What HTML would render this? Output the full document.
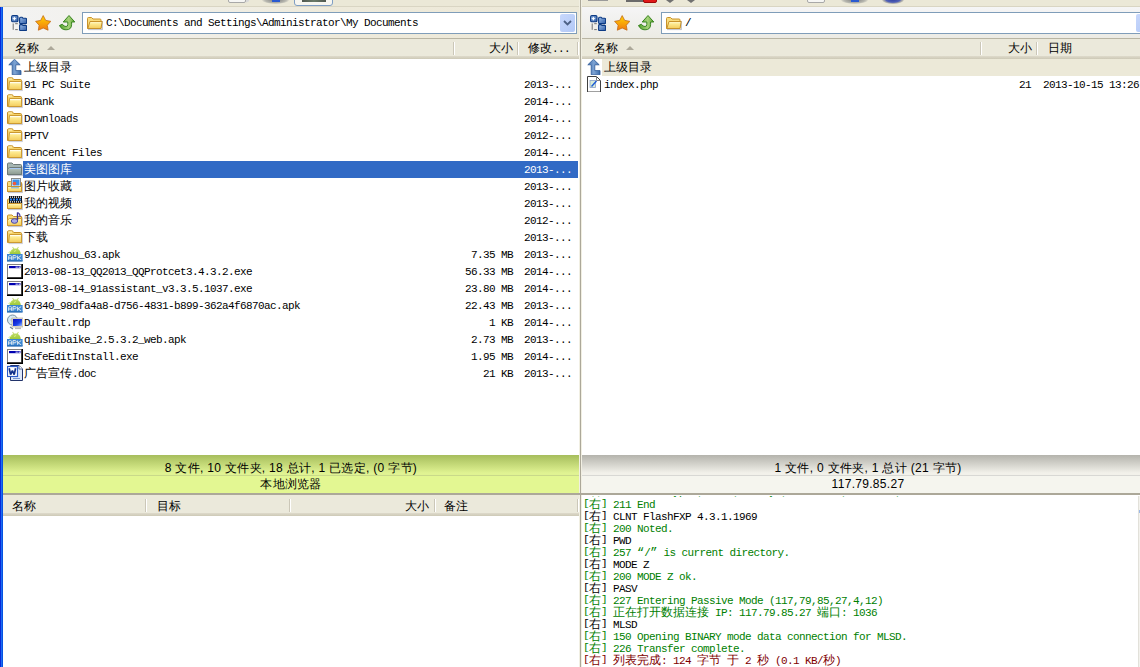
<!DOCTYPE html>
<html><head><meta charset="utf-8">
<style>
*{box-sizing:border-box;margin:0;padding:0}
html,body{width:1140px;height:667px;overflow:hidden;background:#ece9d8;font-family:"Liberation Sans",sans-serif;font-size:12px;color:#000}
.a{position:absolute}
.m{position:absolute;font-family:"Liberation Mono",monospace;font-size:11px;letter-spacing:-0.6px;white-space:pre;line-height:17px;height:17px}
.c{letter-spacing:0;font-size:12px}
.s{position:absolute;font-family:"Liberation Sans",sans-serif;font-size:12px;white-space:pre;line-height:17px}
.tb{position:absolute;top:7px;height:31px}
.combo{position:absolute;top:12px;height:22px;border:1px solid #7f9db9;background:#fff}
.hdr{position:absolute;height:21px;background:linear-gradient(#b9b5a3 0,#b9b5a3 1px,#ebe9db 1px,#ebe9db 18px,#dedacb 18px,#cdc9b6 21px)}
.sep{position:absolute;width:2px;height:13px;border-left:1px solid #cbc7b8;border-right:1px solid #fff}
.list{position:absolute;background:#fff}
.r{text-align:right}
.b{display:inline-block;transform:translateY(-1.5px) scaleY(.75)}
</style></head><body>


<svg width="0" height="0" style="position:absolute">
<defs>
<linearGradient id="gfold" x1="0" y1="0" x2="0" y2="1"><stop offset="0" stop-color="#fffbd8"/><stop offset="0.35" stop-color="#fde98e"/><stop offset="1" stop-color="#f3cc5c"/></linearGradient>
<linearGradient id="gfoldb" x1="0" y1="0" x2="0" y2="1"><stop offset="0" stop-color="#fff4c0"/><stop offset="1" stop-color="#f0c860"/></linearGradient>
<linearGradient id="ggray" x1="0" y1="0" x2="0" y2="1"><stop offset="0" stop-color="#b8c8c0"/><stop offset="1" stop-color="#8a9890"/></linearGradient>
<linearGradient id="gapk" x1="0" y1="0" x2="0" y2="1"><stop offset="0" stop-color="#c8e070"/><stop offset="1" stop-color="#9cc83a"/></linearGradient>
<linearGradient id="gstar" x1="0" y1="0" x2="0" y2="1"><stop offset="0" stop-color="#ffd400"/><stop offset="1" stop-color="#f27a12"/></linearGradient>
<linearGradient id="garrow" x1="0" y1="0" x2="1" y2="0"><stop offset="0" stop-color="#4ea02a"/><stop offset="0.6" stop-color="#a6d27a"/><stop offset="1" stop-color="#5aa832"/></linearGradient>
<linearGradient id="gblue" x1="0" y1="0" x2="1" y2="0"><stop offset="0" stop-color="#3c6aa8"/><stop offset="0.5" stop-color="#7ea4d4"/><stop offset="1" stop-color="#3c6aa8"/></linearGradient>
<linearGradient id="gtree" x1="0" y1="0" x2="1" y2="1"><stop offset="0" stop-color="#9ec0ec"/><stop offset="1" stop-color="#2c5aa4"/></linearGradient>
<linearGradient id="gscreen" x1="0" y1="0" x2="1" y2="1"><stop offset="0" stop-color="#0a10c0"/><stop offset="0.6" stop-color="#1a40e8"/><stop offset="1" stop-color="#a0c0ff"/></linearGradient>
<symbol id="folder" viewBox="0 0 16 16">
 <path d="M1.5 14.6 H15.4 V5" fill="none" stroke="#5a5a70" stroke-width="1" opacity=".3"/>
 <path d="M0.5 3 Q0.5 1.8 1.7 1.8 H4.8 Q5.6 1.8 6.2 2.6 L6.8 3.5 H13.4 Q14.5 3.5 14.5 4.6 V13.5 H0.5 Z" fill="#f6d46a" stroke="#c48e26"/>
 <path d="M1.3 3 H5" stroke="#fff6c8" stroke-width="1"/>
 <path d="M2.5 5.5 H14.5 V13.5 H1.5 Z" fill="url(#gfold)" stroke="#cc9a32"/>
 <path d="M3 6.6 H13.6" stroke="#fffef0" stroke-width="1"/>
</symbol>
<symbol id="gfolder" viewBox="0 0 16 16">
 <path d="M1 14.6 H15.4 V5.5" fill="none" stroke="#4a5070" stroke-width="1" opacity=".35"/>
 <path d="M0.5 3 Q0.5 2 1.5 2 H5 L6.5 3.5 H13.5 Q14.5 3.5 14.5 4.5 V13.5 H0.5 Z" fill="#a6b6b2" stroke="#6e7a78"/>
 <path d="M2.5 6.5 H14.5 V13.5 H0.5 V8 Z" fill="url(#ggray)" stroke="#6e7a78"/>
 <path d="M3 7.5 H13.5" stroke="#a8c8f0" stroke-width="1"/>
</symbol>
<symbol id="picfolder" viewBox="0 0 16 16">
 <path d="M1 14.6 H15.4 V5.5" fill="none" stroke="#4a5070" stroke-width="1" opacity=".35"/>
 <path d="M0.5 4.5 Q0.5 3.5 1.5 3.5 H3.5 L4.5 4.5 H14.5 V13.5 H0.5 Z" fill="#f8dc7c" stroke="#c8922a"/>
 <rect x="4.5" y="0.5" width="9" height="9" fill="#fff" stroke="#8a8a8a"/>
 <rect x="5.5" y="1.5" width="7" height="6" fill="#3a90e8"/>
 <circle cx="7.5" cy="5.5" r="1.8" fill="#f25a38"/>
 <path d="M0.5 8.5 H14.5 V13.5 H0.5 Z" fill="url(#gfold)" stroke="#c8922a"/>
 <path d="M4 9.8 H12" stroke="#6aaae8" stroke-width="1"/>
</symbol>
<symbol id="vidfolder" viewBox="0 0 16 16">
 <path d="M1 14.6 H15.4 V5.5" fill="none" stroke="#4a5070" stroke-width="1" opacity=".35"/>
 <path d="M0.5 5 Q0.5 4 1.5 4 H14.5 V13.5 H0.5 Z" fill="#f8dc7c" stroke="#c8922a"/>
 <rect x="2" y="1" width="13" height="7" fill="#101418"/>
 <path d="M3 2.2h1M5 2.2h1M7 2.2h1M9 2.2h1M11 2.2h1M13 2.2h1M3 6.8h1M5 6.8h1M7 6.8h1M9 6.8h1M11 6.8h1M13 6.8h1" stroke="#fff" stroke-width="1.2"/>
 <path d="M3 4.5h2M6 4.5h2M9 4.5h2M12 4.5h2" stroke="#2a80f0" stroke-width="2"/>
 <path d="M0.5 8.5 H14.5 V13.5 H0.5 Z" fill="url(#gfold)" stroke="#c8922a"/>
</symbol>
<symbol id="musfolder" viewBox="0 0 16 16">
 <path d="M1 14.6 H15.4 V5.5" fill="none" stroke="#4a5070" stroke-width="1" opacity=".35"/>
 <path d="M0.5 4 Q0.5 3 1.5 3 H5 L6.5 4.5 H14.5 V13.5 H0.5 Z" fill="#f8dc7c" stroke="#c8922a"/>
 <path d="M2.5 6.5 H14.5 V13.5 H0.5 V8 Z" fill="url(#gfold)" stroke="#d09a30"/>
 <path d="M10.5 0.5 V8" stroke="#38308a" stroke-width="1.4"/>
 <path d="M10.5 0.5 Q13.5 2 13 5" stroke="#5048a8" stroke-width="1.3" fill="none"/>
 <ellipse cx="7.5" cy="9" rx="3.2" ry="2.3" fill="#a8a8e8" stroke="#4a48a0"/>
</symbol>
<symbol id="apk" viewBox="0 0 16 16">
 <path d="M2.5 8.2 Q2.8 4.2 6.2 3 L5.2 1.2 L6 0.8 L7 2.6 Q8.5 2.2 10 2.6 L11 0.8 L11.8 1.2 L10.8 3 Q13.6 4.4 13.8 8.2 Z" fill="url(#gapk)"/>
 <path d="M1.5 6.5 L4.5 5 M7 5.5 L9 4.5" stroke="#d8f088" stroke-width="1"/>
 <rect x="0" y="8" width="15.6" height="7" fill="#3a86d2"/>
 <rect x="0" y="14.4" width="15.6" height="1.2" fill="#2066b0"/>
 <path d="M1.6 13.8V10.6Q1.6 9.6 2.6 9.6H3.6Q4.6 9.6 4.6 10.6V13.8M1.6 12H4.6M6 13.8V9.6H8.2Q9.2 9.6 9.2 10.7Q9.2 11.8 8.2 11.8H6M10.6 9.6V13.8M14.2 9.6L11 11.8L14.2 13.8" fill="none" stroke="#dce6ee" stroke-width="1"/>
</symbol>
<symbol id="exe" viewBox="0 0 16 16">
 <rect x="0" y="1" width="16" height="15" fill="#000"/>
 <rect x="0" y="1" width="14.5" height="13.5" fill="#808080"/>
 <rect x="1" y="2" width="13" height="12" fill="#fff"/>
 <rect x="2" y="3" width="11.5" height="2.2" fill="#0000b0"/>
 <rect x="8.6" y="3.6" width="1.2" height="1.1" fill="#fff"/><rect x="10.3" y="3.6" width="1.2" height="1.1" fill="#fff"/><rect x="12" y="3.6" width="1.2" height="1.1" fill="#fff"/>
</symbol>
<symbol id="rdp" viewBox="0 0 16 16">
 <circle cx="5.5" cy="6" r="5" fill="#d8eaf4" stroke="#7a90a0"/>
 <circle cx="5.5" cy="6" r="1.5" fill="#fff" stroke="#90a0b0" stroke-width=".6"/>
 <path d="M3 13 L6 15" stroke="#6a8090" stroke-width="1.2"/>
 <rect x="5" y="4" width="11" height="9" fill="#e8e4d8" stroke="#b0a890" stroke-width=".6"/>
 <rect x="6" y="5" width="9" height="7" fill="url(#gscreen)"/>
 <rect x="8" y="13.5" width="6" height="1.6" fill="#b8b8b8"/>
</symbol>
<symbol id="doc" viewBox="0 0 16 16">
 <path d="M3.5 0.5 H12 L15.5 4 V15.5 H3.5 Z" fill="#dde8fa" stroke="#22336a"/>
 <path d="M12 0.5 V4 H15.5" fill="#fff" stroke="#5a6c98"/>
 <path d="M6 13.5 H13" stroke="#7a98d0"/>
 <rect x="0.5" y="1.5" width="10" height="10" fill="#fff" stroke="#2a5ac8" stroke-width="1.2"/>
 <path d="M2.2 3.2 L3.6 9.6 L5.4 5.6 L7.2 9.6 L8.6 3.2" fill="none" stroke="#10308a" stroke-width="1.7" stroke-linejoin="bevel"/>
</symbol>
<symbol id="php" viewBox="0 0 16 16">
 <path d="M1.5 0.5 H10.5 L14.5 4.5 V16 H1.5 Z" fill="#fff" stroke="#404040"/>
 <path d="M10.5 0.5 V4.5 H14.5" fill="none" stroke="#808080"/>
 <rect x="4" y="4.5" width="5.5" height="7" fill="#d8ecd8" stroke="#8aa0c8" stroke-width=".8"/>
 <path d="M5.5 10.5 L10.5 5" stroke="#1a5ad8" stroke-width="1.4"/>
</symbol>
<symbol id="up" viewBox="0 0 16 16">
 <path d="M7.5 0.3 L13.2 5.8 H8.8 V11.6 H14 V15.8 H5.2 V5.8 H1.8 Z" fill="url(#gblue)" stroke="#2f5a98" stroke-width=".8"/>
</symbol>
<symbol id="tree" viewBox="0 0 16 16">
 <rect x="0.6" y="0.6" width="6.4" height="6.2" rx="1.3" fill="url(#gtree)" stroke="#0c3a84" stroke-width="1.1"/>
 <path d="M3.4 1.6 L4.1 3.1 L5.6 3.7 L4.1 4.3 L3.4 5.8 L2.7 4.3 L1.2 3.7 L2.7 3.1 Z" fill="#fff"/>
 <path d="M2.2 8.5 V14.8" stroke="#707070" stroke-width="1"/>
 <path d="M4.2 8.7 H6.8 M4.2 14.6 H6.8" stroke="#707070" stroke-width="1"/>
 <path d="M8.6 3.2 Q8.6 2.2 9.6 2.2 H11 L12 3.2 H14.6 Q15.6 3.2 15.6 4.2 V7.8 Q15.6 8.6 14.6 8.6 H9.6 Q8.6 8.6 8.6 7.8 Z" fill="url(#gtree)" stroke="#0c3a84" stroke-width="1.1"/>
 <path d="M8.6 10.4 Q8.6 9.6 9.6 9.6 H11 L12 10.4 H14.6 Q15.6 10.4 15.6 11.4 V14.8 Q15.6 15.6 14.6 15.6 H9.6 Q8.6 15.6 8.6 14.8 Z" fill="url(#gtree)" stroke="#0c3a84" stroke-width="1.1"/>
</symbol>
<symbol id="star" viewBox="0 0 16 16">
 <path d="M8.20 0.60 L10.73 5.42 L15.8 6.34 L12.29 10.23 L13.08 15.2 L8.20 13.0 L3.32 15.2 L4.11 10.23 L0.6 6.34 L5.67 5.42 Z" fill="url(#gstar)" stroke="#c46a18" stroke-width=".8" stroke-linejoin="round"/>
</symbol>
<symbol id="refresh" viewBox="0 0 16 16">
 <path d="M10 0.5 L15.8 7 H12.6 V9.5 Q12.6 14.8 7 14.8 Q2.5 14.8 0.5 10.5 L3.4 9.2 Q4.6 11.5 7 11.5 Q8.8 11.5 8.8 9.5 V7 H4.2 Z" fill="url(#garrow)" stroke="#2c7c14" stroke-width=".9" stroke-linejoin="round"/>
</symbol>
<symbol id="ofolder" viewBox="0 0 16 16">
 <path d="M1 14.6 H15.4 V6" fill="none" stroke="#4a5070" stroke-width="1" opacity=".35"/>
 <path d="M0.5 3.5 Q0.5 2.5 1.5 2.5 H4.5 L6 4 H13 Q14 4 14 5 V13.5 H0.5 Z" fill="#f8dc7c" stroke="#c8922a"/>
 <path d="M3 6.5 H15.2 L14 13.5 H0.8 Z" fill="url(#gfold)" stroke="#c8922a"/>
</symbol>
</defs></svg>

<div class="a" style="left:0;top:0;width:3px;height:667px;background:linear-gradient(to right,#0828d8 0,#0828d8 1px,#1c6cf2 1px,#1c6cf2 2px,#0452e2 2px)"></div>
<div class="a" style="left:0;top:0;width:1140px;height:7px;background:#ebe8d7;border-bottom:1px solid #d9d5c3"></div>

<div class="a" style="left:228px;top:-3px;width:18px;height:6px;background:#f6f6f4;border:1px solid #a8a8a8;border-radius:0 0 2px 2px"></div>
<div class="a" style="left:246px;top:-2px;width:3px;height:4px;background:#d8d8d8;transform:skewY(-30deg)"></div>
<div class="a" style="left:262px;top:-4px;width:27px;height:8px;border-radius:50%;background:radial-gradient(ellipse at center,#7a7a7a 0,#b8b8b0 55%,rgba(235,232,216,0) 75%)"></div>
<div class="a" style="left:272px;top:0;width:8px;height:2px;background:#2a5ad0"></div>
<div class="a" style="left:294px;top:-4px;width:39px;height:10px;border:1px solid #7f9ec4;border-radius:3px;background:#f7f6f0"></div>
<div class="a" style="left:302px;top:0;width:24px;height:2px;background:linear-gradient(to right,#505850,#6a7a68 50%,#505850)"></div>
<div class="a" style="left:588px;top:0;width:20px;height:1px;background:#9a9a9a"></div>
<div class="a" style="left:626px;top:0;width:18px;height:2px;background:#6a6a6a"></div>
<div class="a" style="left:643px;top:-3px;width:14px;height:6px;background:#e01818;border:1px solid #a00808;border-radius:2px"></div>
<svg class="a" style="left:666px;top:0" width="8" height="4"><path d="M0 0 H8 L4 3 Z" fill="#707070"/></svg>
<svg class="a" style="left:687px;top:0" width="8" height="4"><path d="M0 0 H8 L4 3 Z" fill="#707070"/></svg>
<div class="a" style="left:807px;top:-3px;width:18px;height:6px;background:#f6f6f4;border:1px solid #a8a8a8;border-radius:0 0 2px 2px"></div>
<div class="a" style="left:841px;top:-4px;width:27px;height:8px;border-radius:50%;background:radial-gradient(ellipse at center,#7a7a7a 0,#b8b8b0 55%,rgba(235,232,216,0) 75%)"></div>
<div class="a" style="left:851px;top:0;width:8px;height:2px;background:#2a5ad0"></div>
<div class="a" style="left:882px;top:-5px;width:22px;height:9px;border-radius:50%;background:radial-gradient(ellipse at center,#3040a0 0,#5060b8 45%,#a8a8a8 60%,rgba(235,232,216,0) 80%)"></div>

<div class="tb" style="left:3px;width:576px;background:linear-gradient(to right,#f3f3f2 0,#f2f1ec 120px,#eeeadb 330px,#ede9d8 576px)"></div>
<div class="tb" style="left:582px;width:558px;background:linear-gradient(#f5f5f6,#ecebe4)"></div>
<div class="a" style="left:579px;top:0;width:3px;height:667px;background:linear-gradient(to right,#f1efe2 0,#f1efe2 1px,#aca899 1px,#aca899 2px,#f1efe2 2px)"></div>
<svg class="a" style="left:11px;top:15px" width="16" height="16"><use href="#tree"/></svg>
<svg class="a" style="left:35px;top:15px" width="16" height="16"><use href="#star"/></svg>
<svg class="a" style="left:59px;top:15px" width="16" height="16"><use href="#refresh"/></svg>
<svg class="a" style="left:590px;top:15px" width="16" height="16"><use href="#tree"/></svg>
<svg class="a" style="left:614px;top:15px" width="16" height="16"><use href="#star"/></svg>
<svg class="a" style="left:638px;top:15px" width="16" height="16"><use href="#refresh"/></svg>
<div class="combo" style="left:82px;width:495px"></div>
<svg class="a" style="left:87px;top:15px" width="16" height="16"><use href="#ofolder"/></svg>
<div class="m" style="left:106px;top:15px">C:\Documents and Settings\Administrator\My Documents</div>
<div class="a" style="left:560px;top:14px;width:15px;height:18px;border-radius:2px;background:linear-gradient(135deg,#c8d8fc,#b2c8f6)"></div>
<svg class="a" style="left:560px;top:14px" width="15" height="18"><path d="M4 7 l3.5 3.5 l3.5 -3.5" fill="none" stroke="#4d6185" stroke-width="1.8"/></svg>
<div class="combo" style="left:661px;width:490px"></div>
<svg class="a" style="left:666px;top:15px" width="16" height="16"><use href="#ofolder"/></svg>
<div class="m" style="left:685px;top:15px">/</div>
<div class="a" style="left:1136px;top:14px;width:15px;height:18px;border-radius:2px;background:linear-gradient(135deg,#c8d8fc,#b2c8f6)"></div>
<div class="hdr" style="left:3px;top:38px;width:576px"></div>
<div class="hdr" style="left:582px;top:38px;width:558px"></div>
<div class="s" style="left:15px;top:40px">名称</div>
<svg class="a" style="left:46px;top:44px" width="10" height="8"><path d="M1 6 L5 2 L9 6 Z" fill="#aca899"/></svg>
<div class="sep" style="left:453px;top:42px"></div>
<div class="sep" style="left:517px;top:42px"></div>
<div class="sep" style="left:577px;top:42px"></div>
<div class="s" style="left:489px;top:40px">大小</div>
<div class="s" style="left:528px;top:40px">修改<span style="font-family:Liberation Mono;font-size:11px;letter-spacing:-0.6px">...</span></div>
<div class="s" style="left:594px;top:40px">名称</div>
<svg class="a" style="left:625px;top:44px" width="10" height="8"><path d="M1 6 L5 2 L9 6 Z" fill="#aca899"/></svg>
<div class="sep" style="left:980px;top:42px"></div>
<div class="sep" style="left:1036px;top:42px"></div>
<div class="s" style="left:1008px;top:40px">大小</div>
<div class="s" style="left:1048px;top:40px">日期</div>
<div class="list" style="left:3px;top:59px;width:576px;height:396px"></div>
<div class="list" style="left:582px;top:59px;width:558px;height:396px"></div>
<svg class="a" style="left:7px;top:59px" width="16" height="16"><use href="#up"/></svg>
<div class="m" style="left:24px;top:60px;color:#000"><span class="c">上级目录</span></div>
<svg class="a" style="left:7px;top:76px" width="16" height="16"><use href="#folder"/></svg>
<div class="m" style="left:24px;top:77px;color:#000">91 PC Suite</div>
<div class="m" style="left:524px;top:77px;color:#000">2013-...</div>
<svg class="a" style="left:7px;top:93px" width="16" height="16"><use href="#folder"/></svg>
<div class="m" style="left:24px;top:94px;color:#000">DBank</div>
<div class="m" style="left:524px;top:94px;color:#000">2014-...</div>
<svg class="a" style="left:7px;top:110px" width="16" height="16"><use href="#folder"/></svg>
<div class="m" style="left:24px;top:111px;color:#000">Downloads</div>
<div class="m" style="left:524px;top:111px;color:#000">2014-...</div>
<svg class="a" style="left:7px;top:127px" width="16" height="16"><use href="#folder"/></svg>
<div class="m" style="left:24px;top:128px;color:#000">PPTV</div>
<div class="m" style="left:524px;top:128px;color:#000">2012-...</div>
<svg class="a" style="left:7px;top:144px" width="16" height="16"><use href="#folder"/></svg>
<div class="m" style="left:24px;top:145px;color:#000">Tencent Files</div>
<div class="m" style="left:524px;top:145px;color:#000">2014-...</div>
<div class="a" style="left:23px;top:161px;width:555px;height:17px;background:#316ac5"></div>
<svg class="a" style="left:7px;top:161px" width="16" height="16"><use href="#gfolder"/></svg>
<div class="m" style="left:24px;top:162px;color:#fff"><span class="c">美图图库</span></div>
<div class="m" style="left:524px;top:162px;color:#fff">2013-...</div>
<svg class="a" style="left:7px;top:178px" width="16" height="16"><use href="#picfolder"/></svg>
<div class="m" style="left:24px;top:179px;color:#000"><span class="c">图片收藏</span></div>
<div class="m" style="left:524px;top:179px;color:#000">2013-...</div>
<svg class="a" style="left:7px;top:195px" width="16" height="16"><use href="#vidfolder"/></svg>
<div class="m" style="left:24px;top:196px;color:#000"><span class="c">我的视频</span></div>
<div class="m" style="left:524px;top:196px;color:#000">2013-...</div>
<svg class="a" style="left:7px;top:212px" width="16" height="16"><use href="#musfolder"/></svg>
<div class="m" style="left:24px;top:213px;color:#000"><span class="c">我的音乐</span></div>
<div class="m" style="left:524px;top:213px;color:#000">2012-...</div>
<svg class="a" style="left:7px;top:229px" width="16" height="16"><use href="#folder"/></svg>
<div class="m" style="left:24px;top:230px;color:#000"><span class="c">下载</span></div>
<div class="m" style="left:524px;top:230px;color:#000">2013-...</div>
<svg class="a" style="left:7px;top:246px" width="16" height="16"><use href="#apk"/></svg>
<div class="m" style="left:24px;top:247px;color:#000">91zhushou_63.apk</div>
<div class="m r" style="left:440px;width:73px;top:247px;color:#000">7.35 MB</div>
<div class="m" style="left:524px;top:247px;color:#000">2013-...</div>
<svg class="a" style="left:7px;top:263px" width="16" height="16"><use href="#exe"/></svg>
<div class="m" style="left:24px;top:264px;color:#000">2013-08-13_QQ2013_QQProtcet3.4.3.2.exe</div>
<div class="m r" style="left:440px;width:73px;top:264px;color:#000">56.33 MB</div>
<div class="m" style="left:524px;top:264px;color:#000">2014-...</div>
<svg class="a" style="left:7px;top:280px" width="16" height="16"><use href="#exe"/></svg>
<div class="m" style="left:24px;top:281px;color:#000">2013-08-14_91assistant_v3.3.5.1037.exe</div>
<div class="m r" style="left:440px;width:73px;top:281px;color:#000">23.80 MB</div>
<div class="m" style="left:524px;top:281px;color:#000">2014-...</div>
<svg class="a" style="left:7px;top:297px" width="16" height="16"><use href="#apk"/></svg>
<div class="m" style="left:24px;top:298px;color:#000">67340_98dfa4a8-d756-4831-b899-362a4f6870ac.apk</div>
<div class="m r" style="left:440px;width:73px;top:298px;color:#000">22.43 MB</div>
<div class="m" style="left:524px;top:298px;color:#000">2013-...</div>
<svg class="a" style="left:7px;top:314px" width="16" height="16"><use href="#rdp"/></svg>
<div class="m" style="left:24px;top:315px;color:#000">Default.rdp</div>
<div class="m r" style="left:440px;width:73px;top:315px;color:#000">1 KB</div>
<div class="m" style="left:524px;top:315px;color:#000">2014-...</div>
<svg class="a" style="left:7px;top:331px" width="16" height="16"><use href="#apk"/></svg>
<div class="m" style="left:24px;top:332px;color:#000">qiushibaike_2.5.3.2_web.apk</div>
<div class="m r" style="left:440px;width:73px;top:332px;color:#000">2.73 MB</div>
<div class="m" style="left:524px;top:332px;color:#000">2013-...</div>
<svg class="a" style="left:7px;top:348px" width="16" height="16"><use href="#exe"/></svg>
<div class="m" style="left:24px;top:349px;color:#000">SafeEditInstall.exe</div>
<div class="m r" style="left:440px;width:73px;top:349px;color:#000">1.95 MB</div>
<div class="m" style="left:524px;top:349px;color:#000">2014-...</div>
<svg class="a" style="left:7px;top:365px" width="16" height="16"><use href="#doc"/></svg>
<div class="m" style="left:24px;top:366px;color:#000"><span class="c">广告宣传</span>.doc</div>
<div class="m r" style="left:440px;width:73px;top:366px;color:#000">21 KB</div>
<div class="m" style="left:524px;top:366px;color:#000">2013-...</div>
<div class="a" style="left:602px;top:59px;width:538px;height:17px;background:#ece9d8"></div>
<svg class="a" style="left:586px;top:59px" width="16" height="16"><use href="#up"/></svg>
<div class="m" style="left:604px;top:60px"><span class="c">上级目录</span></div>
<svg class="a" style="left:586px;top:76px" width="16" height="16"><use href="#php"/></svg>
<div class="m" style="left:604px;top:77px">index.php</div>
<div class="m r" style="left:960px;width:71px;top:77px">21</div>
<div class="m" style="left:1043px;top:77px">2013-10-15 13:26</div>
<div class="a" style="left:3px;top:455px;width:576px;height:38px;background:linear-gradient(#a6bd5c 0,#e0f392 18px,#e0f392 20px,#c9d98a 20px,#c9d98a 21px,#e3f792 21px)"></div>
<div class="a" style="left:582px;top:455px;width:558px;height:38px;background:linear-gradient(#b4b3ac 0,#f2f1ea 18px,#f2f1ea 20px,#d8d8d4 20px,#d8d8d4 21px,#f5f5ee 21px)"></div>
<div class="s" style="left:3px;width:576px;top:460px;text-align:center;letter-spacing:.3px">8 文件, 10 文件夹, 18 总计, 1 已选定, (0 字节)</div>
<div class="s" style="left:3px;width:576px;top:476px;text-align:center;letter-spacing:.3px">本地浏览器</div>
<div class="s" style="left:582px;width:572px;top:460px;text-align:center;letter-spacing:.3px">1 文件, 0 文件夹, 1 总计 (21 字节)</div>
<div class="s" style="left:582px;width:572px;top:476px;text-align:center;letter-spacing:.3px">117.79.85.27</div>
<div class="a" style="left:3px;top:493px;width:1137px;height:2px;background:#aca899"></div>
<div class="hdr" style="left:3px;top:495px;width:576px;height:21px;background:linear-gradient(#ebe9db 0,#ebe9db 18px,#dedacb 18px,#cdc9b6 21px)"></div>
<div class="s" style="left:12px;top:498px">名称</div>
<div class="sep" style="left:145px;top:499px"></div>
<div class="sep" style="left:289px;top:499px"></div>
<div class="sep" style="left:434px;top:499px"></div>
<div class="sep" style="left:577px;top:499px"></div>
<div class="s" style="left:157px;top:498px">目标</div>
<div class="s" style="left:405px;top:498px">大小</div>
<div class="s" style="left:444px;top:498px">备注</div>
<div class="list" style="left:3px;top:516px;width:576px;height:151px"></div>
<div class="list" style="left:582px;top:495px;width:558px;height:172px;overflow:hidden"></div>
<div class="a" style="left:582px;top:496px;width:558px;height:171px;overflow:hidden">
<div class="m" style="left:1px;top:-10px;color:#008000;line-height:12px;height:12px"><span class="b">[</span><span class="c">右</span><span class="b">]</span> 211-mlst type*;size*;modify*;UNIX.mode;UNIX.uid;</div>
<div class="m" style="left:1px;top:3px;color:#008000;line-height:12px;height:12px"><span class="b">[</span><span class="c">右</span><span class="b">]</span> 211 End</div>
<div class="m" style="left:1px;top:15px;color:#000;line-height:12px;height:12px"><span class="b">[</span><span class="c">右</span><span class="b">]</span> CLNT FlashFXP 4.3.1.1969</div>
<div class="m" style="left:1px;top:27px;color:#008000;line-height:12px;height:12px"><span class="b">[</span><span class="c">右</span><span class="b">]</span> 200 Noted.</div>
<div class="m" style="left:1px;top:39px;color:#000;line-height:12px;height:12px"><span class="b">[</span><span class="c">右</span><span class="b">]</span> PWD</div>
<div class="m" style="left:1px;top:51px;color:#008000;line-height:12px;height:12px"><span class="b">[</span><span class="c">右</span><span class="b">]</span> 257 <span class="c">“</span>/<span class="c">”</span> is current directory.</div>
<div class="m" style="left:1px;top:63px;color:#000;line-height:12px;height:12px"><span class="b">[</span><span class="c">右</span><span class="b">]</span> MODE Z</div>
<div class="m" style="left:1px;top:75px;color:#008000;line-height:12px;height:12px"><span class="b">[</span><span class="c">右</span><span class="b">]</span> 200 MODE Z ok.</div>
<div class="m" style="left:1px;top:87px;color:#000;line-height:12px;height:12px"><span class="b">[</span><span class="c">右</span><span class="b">]</span> PASV</div>
<div class="m" style="left:1px;top:99px;color:#008000;line-height:12px;height:12px"><span class="b">[</span><span class="c">右</span><span class="b">]</span> 227 Entering Passive Mode (117,79,85,27,4,12)</div>
<div class="m" style="left:1px;top:111px;color:#008000;line-height:12px;height:12px"><span class="b">[</span><span class="c">右</span><span class="b">]</span> <span class="c">正在打开数据连接</span> IP: 117.79.85.27 <span class="c">端口</span>: 1036</div>
<div class="m" style="left:1px;top:123px;color:#000;line-height:12px;height:12px"><span class="b">[</span><span class="c">右</span><span class="b">]</span> MLSD</div>
<div class="m" style="left:1px;top:135px;color:#008000;line-height:12px;height:12px"><span class="b">[</span><span class="c">右</span><span class="b">]</span> 150 Opening BINARY mode data connection for MLSD.</div>
<div class="m" style="left:1px;top:147px;color:#008000;line-height:12px;height:12px"><span class="b">[</span><span class="c">右</span><span class="b">]</span> 226 Transfer complete.</div>
<div class="m" style="left:1px;top:159px;color:#800000;line-height:12px;height:12px"><span class="b">[</span><span class="c">右</span><span class="b">]</span> <span class="c">列表完成</span>: 124 <span class="c">字节</span> <span class="c">于</span> 2 <span class="c">秒</span> (0.1 KB/<span class="c">秒</span>)</div>
</div>
<div class="a" style="left:1138px;top:496px;width:2px;height:171px;background:linear-gradient(to right,#e2e1da 0,#e2e1da 1px,#f3f2ed 1px)"></div>
<div class="a" style="left:1139px;top:510px;width:1px;height:3px;background:#9ab8e8"></div>
</body></html>
